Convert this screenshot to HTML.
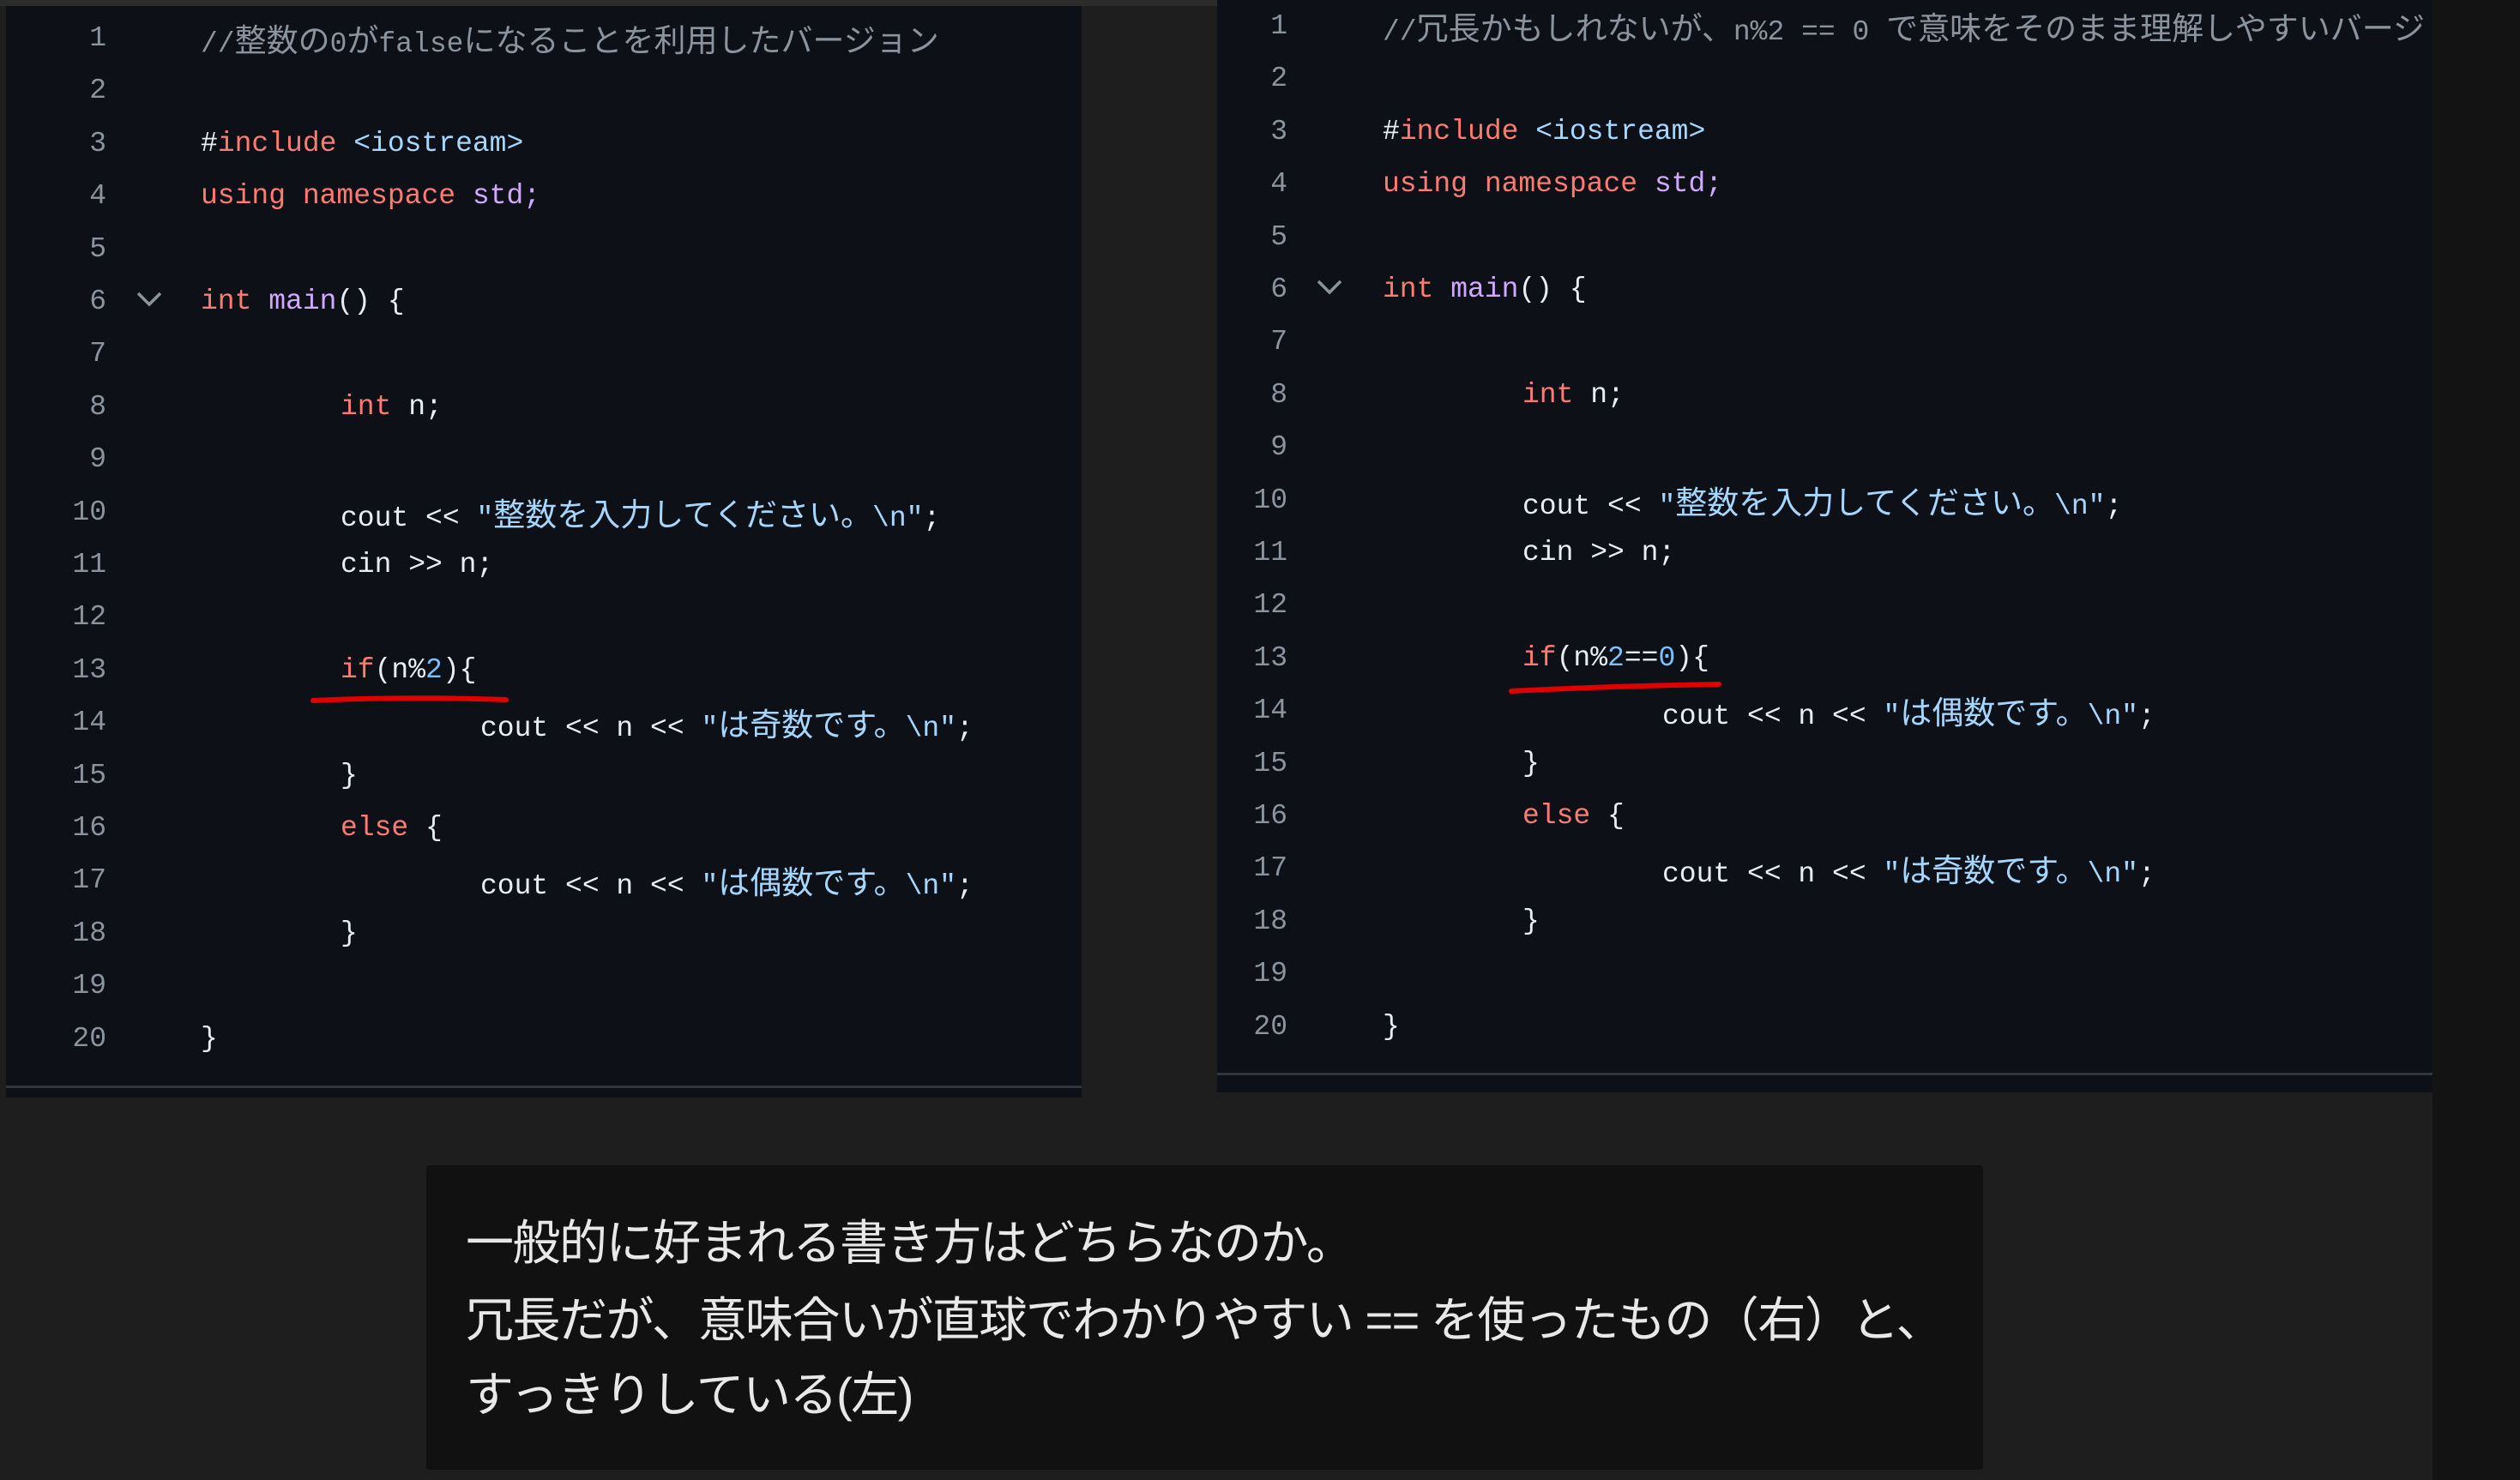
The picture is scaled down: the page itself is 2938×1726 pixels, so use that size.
<!DOCTYPE html>
<html><head><meta charset="utf-8">
<style>
html,body{margin:0;padding:0;}
body{width:2938px;height:1726px;background:#1e1e1e;position:relative;overflow:hidden;font-family:"Liberation Mono","Noto Sans CJK JP",monospace;}
.strip{position:absolute;left:2836px;top:0;width:102px;height:1726px;background:#131313;}
.top{position:absolute;left:0;top:0;width:2836px;height:7px;background:#2b2b2b;}
.panel{position:absolute;background:#0d1117;overflow:hidden;}
.ln{position:absolute;height:61.4px;line-height:61.4px;font-size:33px;white-space:pre;color:#e6edf3;}
.num{position:absolute;height:61.4px;line-height:61.4px;font-size:33px;color:#8b949e;text-align:right;width:100px;}
.c{color:#8b949e}.k{color:#ff7b72}.p{color:#d2a8ff}.s{color:#a5d6ff}.b{color:#79c0ff}
.j{font-family:"Noto Sans CJK JP",sans-serif;font-size:37px;}
.hr{position:absolute;height:3px;background:#30363d;}
.box{position:absolute;left:497px;top:1359px;width:1815px;height:355px;background:#111;border-radius:4px;}
.box div{position:absolute;left:46px;font-family:"Liberation Sans","Noto Sans CJK JP",sans-serif;font-size:56px;color:#e8e8e8;white-space:pre;letter-spacing:-1.5px;}
</style></head><body>
<div class="top"></div>
<div class="strip"></div>

<div class="panel" style="left:7px;top:7px;width:1254px;height:1273px;">
<div class="hr" style="left:0;top:1259px;width:1254px;"></div>
</div>
<div class="panel" style="left:1419px;top:0;width:1417px;height:1274px;">
<div class="hr" style="left:0;top:1251px;width:1417px;"></div>
</div>

<div id="L"></div>
<div id="R"></div>

<svg style="position:absolute;left:0;top:0" width="2938" height="1726">
<path d="M365 817 Q470 812 590 816" stroke="#e00000" stroke-width="6" fill="none" stroke-linecap="round"/>
<path d="M1762 806 Q1880 800 2004 798" stroke="#e00000" stroke-width="6" fill="none" stroke-linecap="round"/>
<path d="M161 342 L174 355 L187 342" stroke="#8b949e" stroke-width="3.5" fill="none"/>
<path d="M1537 328 L1550 341 L1563 328" stroke="#8b949e" stroke-width="3.5" fill="none"/>
</svg>

<div class="box">
<div style="top:46px">一般的に好まれる書き方はどちらなのか。</div>
<div style="top:136px">冗長だが、意味合いが直球でわかりやすい == を使ったもの（右）と、</div>
<div style="top:223px">すっきりしている(左)</div>
</div>

<script>
function build(id,px,top,numR,codeX,tab,lines){
  var h='';
  for(var i=0;i<20;i++){
    var y=top+i*61.4;
    h+='<div class="num" style="left:'+(px+numR-100)+'px;top:'+y+'px">'+(i+1)+'</div>';
    var l=lines[i];
    if(l){h+='<div class="ln" style="left:'+(px+codeX+l[0]*tab)+'px;top:'+y+'px">'+l[1]+'</div>';}
  }
  document.getElementById(id).innerHTML=h;
}
var L=[
 [0,'<span class="c">//<span class="j">整数の</span>0<span class="j">が</span>false<span class="j">になることを利用したバージョン</span></span>'],
 null,
 [0,'#<span class="k">include</span> <span class="s">&lt;iostream&gt;</span>'],
 [0,'<span class="k">using namespace</span> <span class="p">std;</span>'],
 null,
 [0,'<span class="k">int</span> <span class="p">main</span>() {'],
 null,
 [1,'<span class="k">int</span> n;'],
 null,
 [1,'cout &lt;&lt; <span class="s">"<span class="j">整数を入力してください。</span>\\n"</span>;'],
 [1,'cin &gt;&gt; n;'],
 null,
 [1,'<span class="k">if</span>(n%<span class="b">2</span>){'],
 [2,'cout &lt;&lt; n &lt;&lt; <span class="s">"<span class="j">は奇数です。</span>\\n"</span>;'],
 [1,'}'],
 [1,'<span class="k">else</span> {'],
 [2,'cout &lt;&lt; n &lt;&lt; <span class="s">"<span class="j">は偶数です。</span>\\n"</span>;'],
 [1,'}'],
 null,
 [0,'}']
];
var R=L.slice();
R[0]=[0,'<span class="c">//<span class="j">冗長かもしれないが、</span>n%2 == 0 <span class="j">で意味をそのまま理解しやすいバージョン</span></span>'];
R[12]=[1,'<span class="k">if</span>(n%<span class="b">2</span>==<span class="b">0</span>){'];
R[13]=[2,'cout &lt;&lt; n &lt;&lt; <span class="s">"<span class="j">は偶数です。</span>\\n"</span>;'];
R[16]=[2,'cout &lt;&lt; n &lt;&lt; <span class="s">"<span class="j">は奇数です。</span>\\n"</span>;'];
build('L',0,14,124,234,163,L);
build('R',0,0,1501,1612,163,R);
</script>
<style>#R .ln{max-width:1220px;overflow:hidden;}</style>
</body></html>
